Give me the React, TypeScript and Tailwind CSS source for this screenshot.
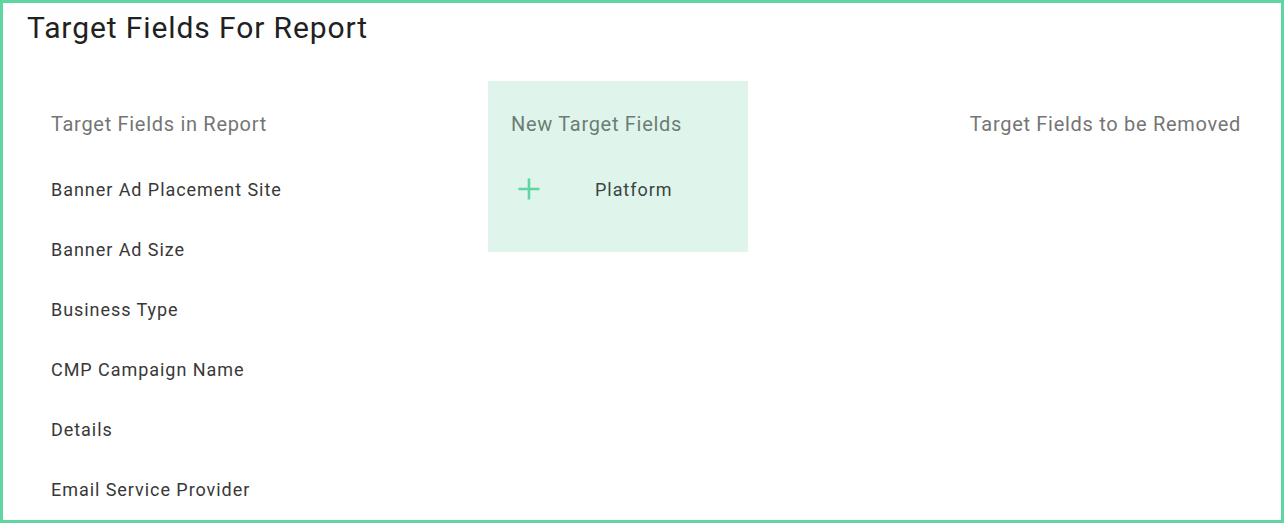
const inReport = [
  'Banner Ad Placement Site',
  'Banner Ad Size',
  'Business Type',
  'CMP Campaign Name',
  'Details',
  'Email Service Provider',
];

function PlusIcon() {
  return (
    <svg width="24" height="24" viewBox="0 0 24 24" fill="none">
      <path d="M12 1.5v21M1.5 12h21" stroke="#5fd5a1" strokeWidth="2.6" />
    </svg>
  );
}

export default function App() {
  return (
    <div
      className="w-[1284px] h-[523px] border-[3px] border-[#5fd5a1] bg-white overflow-hidden"
      style={{ fontFamily: 'Roboto, "Liberation Sans", sans-serif' }}
    >
      <h1 className="mt-[7px] ml-[24px] text-[30px] leading-[36px] tracking-[0.9px] text-[#212121]">
        Target Fields For Report
      </h1>
      <div className="flex mt-[35px] pl-[25px] pr-[40px]">
        <div className="w-[460px] pt-[31px] px-[23px]">
          <div className="text-[20px] leading-[24px] tracking-[0.7px] text-[#757575]">
            Target Fields in Report
          </div>
          <div className="mt-[23px]">
            {inReport.map((f) => (
              <div
                key={f}
                className="h-[60px] flex items-center text-[18px] tracking-[0.95px] text-[#383838]"
              >
                {f}
              </div>
            ))}
          </div>
        </div>
        <div className="w-[260px] self-start bg-[#dff5ec] pt-[31px] pb-[33px] px-[23px]">
          <div className="text-[20px] leading-[24px] tracking-[0.7px] text-[#6c7d75]">
            New Target Fields
          </div>
          <div className="mt-[23px] h-[60px] flex items-center text-[18px] tracking-[0.95px] text-[#3a4540]">
            <span className="ml-[6px] w-[78px]">
              <PlusIcon />
            </span>
            Platform
          </div>
        </div>
        <div className="ml-auto pt-[31px]">
          <div className="text-[20px] leading-[24px] tracking-[0.7px] text-[#757575]">
            Target Fields to be Removed
          </div>
        </div>
      </div>
    </div>
  );
}
